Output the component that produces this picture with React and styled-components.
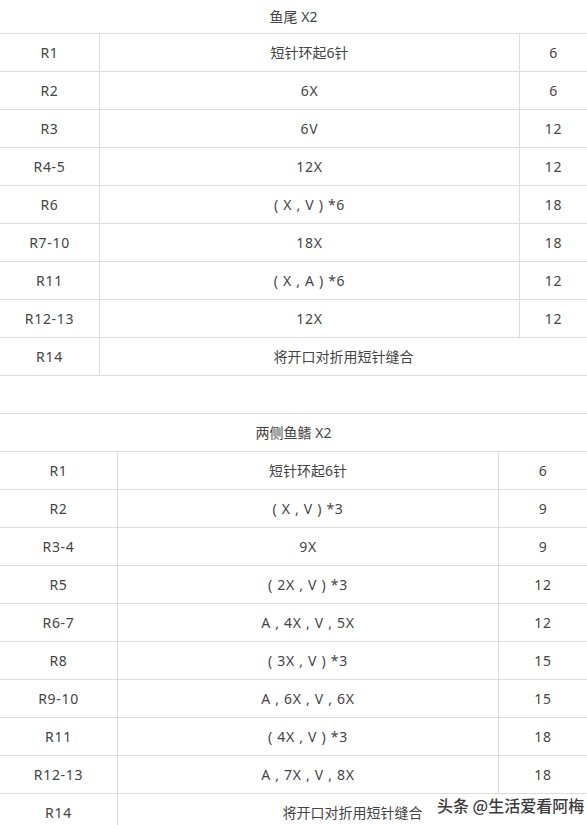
import React from 'react';
import styled, { createGlobalStyle } from 'styled-components';

const GlobalStyle = createGlobalStyle`
  html, body {
    margin: 0;
    padding: 0;
    background: #fff;
  }
  body {
    font-family: "Noto Sans", "Noto Sans CJK SC", sans-serif;
    color: #444;
  }
`;

const Page = styled.div`
  position: relative;
  width: 587px;
  height: 825px;
  overflow: hidden;
  background: #fff;
`;

const Row = styled.div`
  display: grid;
  grid-template-columns: ${({ cols }) => cols};
  height: ${({ h }) => h || 38}px;
  box-sizing: border-box;
  border-bottom: 1px solid #dcdcdc;
`;

const Cell = styled.div`
  display: flex;
  align-items: center;
  justify-content: center;
  box-sizing: border-box;
  font-size: 14px;
  line-height: 1;
  color: #444;
  letter-spacing: ${({ wide }) => (wide ? '0.7px' : '0')};
  white-space: pre;
  & + & {
    border-left: 1px solid #dcdcdc;
  }
`;

const Spacer = styled.div`
  height: 38px;
  box-sizing: border-box;
  border-bottom: 1px solid #dcdcdc;
`;

const Watermark = styled.div`
  position: absolute;
  left: 437px;
  top: 795px;
  font-family: "Noto Sans CJK SC", sans-serif;
  font-size: 16px;
  font-weight: 500;
  line-height: 20px;
  color: #3a3a3a;
  text-shadow: 0 0 2px #fff, 0 0 2px #fff, 0 0 3px #fff;
  white-space: nowrap;
`;

const tail = [
  ['R1', '短针环起6针', '6'],
  ['R2', '6X', '6'],
  ['R3', '6V', '12'],
  ['R4-5', '12X', '12'],
  ['R6', '( X , V ) *6', '18'],
  ['R7-10', '18X', '18'],
  ['R11', '( X , A ) *6', '12'],
  ['R12-13', '12X', '12'],
];

const fin = [
  ['R1', '短针环起6针', '6'],
  ['R2', '( X , V ) *3', '9'],
  ['R3-4', '9X', '9'],
  ['R5', '( 2X , V ) *3', '12'],
  ['R6-7', 'A , 4X , V , 5X', '12'],
  ['R8', '( 3X , V ) *3', '15'],
  ['R9-10', 'A , 6X , V , 6X', '15'],
  ['R11', '( 4X , V ) *3', '18'],
  ['R12-13', 'A , 7X , V , 8X', '18'],
];

const isLatin = text => !/[\u4e00-\u9fff]/.test(text);

const Text = ({ children }) => <Cell wide={isLatin(children)}>{children}</Cell>;

const PatternTable = ({ title, titleHeight, rows, first, mid, last }) => (
  <>
    <Row cols="1fr" h={titleHeight}>
      <Cell>{title}</Cell>
    </Row>
    {rows.map(([round, stitch, count]) => (
      <Row key={round} cols={`${first}px ${mid}px 1fr`}>
        <Text>{round}</Text>
        <Text>{stitch}</Text>
        <Text>{count}</Text>
      </Row>
    ))}
    <Row cols={`${first}px 1fr`}>
      <Text>{last}</Text>
      <Text>将开口对折用短针缝合</Text>
    </Row>
  </>
);

const App = () => (
  <Page>
    <GlobalStyle />
    <PatternTable title="鱼尾 X2" titleHeight={34} rows={tail} first={99} mid={420} last="R14" />
    <Spacer />
    <PatternTable title="两侧鱼鳍 X2" titleHeight={38} rows={fin} first={117} mid={381} last="R14" />
    <Watermark>头条 @生活爱看阿梅</Watermark>
  </Page>
);

export default App;
